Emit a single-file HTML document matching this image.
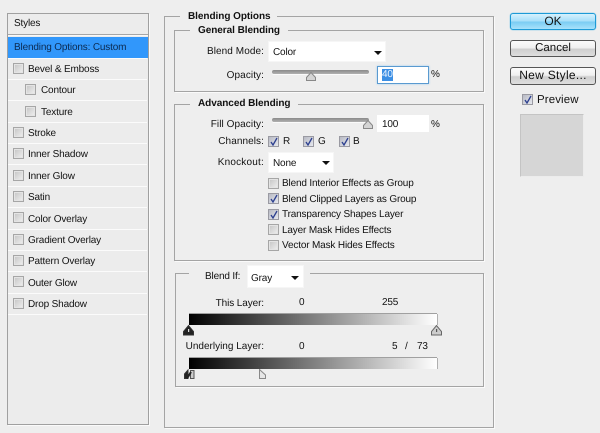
<!DOCTYPE html>
<html><head><meta charset="utf-8"><style>
html,body{margin:0;padding:0}
body{width:600px;height:433px;overflow:hidden;background:#eeeeee;position:relative;font-family:"Liberation Sans",sans-serif;font-size:10px;color:#111;text-rendering:geometricPrecision}
.a{position:absolute}
.t{position:absolute;white-space:nowrap;line-height:16px;letter-spacing:-.16px}
.t.r{text-align:right;letter-spacing:.08px}
.t.b{font-weight:bold;letter-spacing:-.05px;color:#111}
.g{position:absolute;border:1px solid #a4a4a4;box-shadow:1px 1px 0 #fafafa;box-sizing:border-box}
.lb{position:absolute;background:#eeeeee;height:12px}
.cb{position:absolute;width:11px;height:11px;box-sizing:border-box;border:1px solid #a6a6a6;background:linear-gradient(135deg,#c4c4c4,#f0f0f0);box-shadow:inset 0 0 0 1px #e4e4e4}
.cb.c{background:linear-gradient(135deg,#b8bac4,#e6e8ee);border-color:#9a9aa2;box-shadow:none}
.cb svg{position:absolute;left:0;top:0}
.sep{position:absolute;left:8px;width:139px;height:1px;background:#fbfbfb}
.dd{position:absolute;background:#fff;box-sizing:border-box;box-shadow:0 0 0 1px #f6f6f6}
.dd i{position:absolute;width:0;height:0;border-left:4px solid transparent;border-right:4px solid transparent;border-top:4px solid #111}
.tr{position:absolute;height:4px;background:linear-gradient(#8a8a8a,#b0b0b0);border-radius:2px;box-shadow:0 1px 0 #fafafa}
.btn{position:absolute;left:510px;width:86px;height:17px;box-sizing:border-box;border:1px solid #555;border-radius:3px;background:linear-gradient(#fbfbfb,#f0f0f0 45%,#cfcfcf 55%,#dedede);text-align:center;line-height:15px;font-size:12px;letter-spacing:.3px;color:#111}
.ip{position:absolute;background:#fff;box-sizing:border-box}
.grad{position:absolute;left:189px;width:248px;height:11px;background:linear-gradient(90deg,#000,#fff);box-shadow:0 -1px 0 #a0a0a0,1px 0 0 #b0b0b0}
svg{display:block}
</style></head><body>

<!-- left panel -->
<div class="g" style="left:7px;top:13px;width:142px;height:412px;background:#ececec;border-color:#a0a0a0"></div>
<div class="a" style="left:8px;top:34px;width:140px;height:1px;background:#a6a6a6"></div>
<div class="a" style="left:8px;top:35px;width:140px;height:1px;background:#f8f8f8"></div>
<div class="t" style="left:14px;top:16px">Styles</div>
<div class="a" style="left:8px;top:37px;width:140px;height:21px;background:#3197fb"></div>
<div class="t" style="left:14px;top:40px;color:#0c2a50">Blending Options: Custom</div>

<div class="sep" style="top:58px"></div><div class="sep" style="top:79px"></div><div class="sep" style="top:100px"></div><div class="sep" style="top:122px"></div><div class="sep" style="top:143px"></div><div class="sep" style="top:164px"></div><div class="sep" style="top:186px"></div><div class="sep" style="top:207px"></div><div class="sep" style="top:229px"></div><div class="sep" style="top:250px"></div><div class="sep" style="top:271px"></div><div class="sep" style="top:293px"></div><div class="sep" style="top:314px"></div>

<div class="cb" style="left:13px;top:63px"></div><div class="t" style="left:28px;top:62px">Bevel &amp; Emboss</div>
<div class="cb" style="left:25px;top:84px"></div><div class="t" style="left:41px;top:83px">Contour</div>
<div class="cb" style="left:25px;top:106px"></div><div class="t" style="left:41px;top:105px">Texture</div>
<div class="cb" style="left:13px;top:127px"></div><div class="t" style="left:28px;top:126px">Stroke</div>
<div class="cb" style="left:13px;top:148px"></div><div class="t" style="left:28px;top:147px">Inner Shadow</div>
<div class="cb" style="left:13px;top:170px"></div><div class="t" style="left:28px;top:169px">Inner Glow</div>
<div class="cb" style="left:13px;top:191px"></div><div class="t" style="left:28px;top:190px">Satin</div>
<div class="cb" style="left:13px;top:212px"></div><div class="t" style="left:28px;top:212px">Color Overlay</div>
<div class="cb" style="left:13px;top:234px"></div><div class="t" style="left:28px;top:233px">Gradient Overlay</div>
<div class="cb" style="left:13px;top:255px"></div><div class="t" style="left:28px;top:254px">Pattern Overlay</div>
<div class="cb" style="left:13px;top:276px"></div><div class="t" style="left:28px;top:276px">Outer Glow</div>
<div class="cb" style="left:13px;top:298px"></div><div class="t" style="left:28px;top:297px">Drop Shadow</div>

<!-- groups -->
<div class="g" style="left:164px;top:16px;width:330px;height:412px"></div>
<div class="lb" style="left:180px;top:10px;width:97px"></div>
<div class="t b" style="left:188px;top:9px">Blending Options</div>

<div class="g" style="left:174px;top:30px;width:310px;height:62px"></div>
<div class="lb" style="left:190px;top:24px;width:98px"></div>
<div class="t b" style="left:198px;top:23px">General Blending</div>

<div class="g" style="left:174px;top:104px;width:310px;height:157px"></div>
<div class="lb" style="left:190px;top:98px;width:108px"></div>
<div class="t b" style="left:198px;top:96px">Advanced Blending</div>

<div class="g" style="left:175px;top:273px;width:309px;height:114px"></div>
<div class="lb" style="left:189px;top:267px;width:121px;height:14px"></div>

<!-- general -->
<div class="t r" style="left:180px;width:84px;top:44px">Blend Mode:</div>
<div class="dd" style="left:269px;top:42px;width:116px;height:19px"><i style="left:105px;top:9px"></i></div>
<div class="t" style="left:273px;top:45px">Color</div>
<div class="t r" style="left:180px;width:84px;top:68px">Opacity:</div>
<div class="tr" style="left:272px;top:70px;width:97px"></div>
<svg class="a" style="left:305px;top:70px" width="12" height="12"><path d="M1.5 10.5V7.5L6 2.5l4.500 5v3z" fill="#d4d4d4" stroke="#888"/></svg>
<div class="ip" style="left:377px;top:66px;width:52px;height:18px;border:1px solid #5a9ad0;box-shadow:0 0 2px #9ccbf0"></div>
<div class="a" style="left:382px;top:69px;width:11px;height:12px;background:#3c8fe4"></div>
<div class="t" style="left:382px;top:67px;color:#eaf3ff">40</div>
<div class="t" style="left:431px;top:67px">%</div>

<!-- advanced -->
<div class="t r" style="left:180px;width:84px;top:117px">Fill Opacity:</div>
<div class="tr" style="left:272px;top:118px;width:97px"></div>
<svg class="a" style="left:362px;top:118px" width="12" height="12"><path d="M1.5 10.5V7.5L6 2.5l4.500 5v3z" fill="#d4d4d4" stroke="#888"/></svg>
<div class="ip" style="left:377px;top:115px;width:52px;height:17px"></div>
<div class="t" style="left:382px;top:117px">100</div>
<div class="t" style="left:431px;top:117px">%</div>

<div class="t r" style="left:180px;width:84px;top:134px">Channels:</div>
<div class="cb c" style="left:268px;top:136px"><svg width="10" height="10"><path d="M2 5l2 3 4-7" fill="none" stroke="#2c3f8f" stroke-width="1.3"/></svg></div>
<div class="t" style="left:283px;top:134px">R</div>
<div class="cb c" style="left:303px;top:136px"><svg width="10" height="10"><path d="M2 5l2 3 4-7" fill="none" stroke="#2c3f8f" stroke-width="1.3"/></svg></div>
<div class="t" style="left:318px;top:134px">G</div>
<div class="cb c" style="left:339px;top:136px"><svg width="10" height="10"><path d="M2 5l2 3 4-7" fill="none" stroke="#2c3f8f" stroke-width="1.3"/></svg></div>
<div class="t" style="left:353px;top:134px">B</div>

<div class="t r" style="left:180px;width:84px;top:155px;letter-spacing:.2px">Knockout:</div>
<div class="dd" style="left:269px;top:153px;width:64px;height:19px"><i style="left:53px;top:8px"></i></div>
<div class="t" style="left:273px;top:156px">None</div>

<div class="cb" style="left:268px;top:178px"></div><div class="t" style="left:282px;top:176px">Blend Interior Effects as Group</div>
<div class="cb c" style="left:268px;top:193px"><svg width="10" height="10"><path d="M2 5l2 3 4-7" fill="none" stroke="#2c3f8f" stroke-width="1.3"/></svg></div><div class="t" style="left:282px;top:192px">Blend Clipped Layers as Group</div>
<div class="cb c" style="left:268px;top:209px"><svg width="10" height="10"><path d="M2 5l2 3 4-7" fill="none" stroke="#2c3f8f" stroke-width="1.3"/></svg></div><div class="t" style="left:282px;top:207px">Transparency Shapes Layer</div>
<div class="cb" style="left:268px;top:224px"></div><div class="t" style="left:282px;top:223px">Layer Mask Hides Effects</div>
<div class="cb" style="left:268px;top:240px"></div><div class="t" style="left:282px;top:238px">Vector Mask Hides Effects</div>

<!-- blend if -->
<div class="t" style="left:205px;top:269px">Blend If:</div>
<div class="dd" style="left:248px;top:266px;width:55px;height:21px"><i style="left:43px;top:10px"></i></div>
<div class="t" style="left:251px;top:271px">Gray</div>

<div class="t r" style="left:170px;width:94px;top:296px;letter-spacing:-.1px">This Layer:</div>
<div class="t" style="left:299px;top:295px">0</div>
<div class="t" style="left:382px;top:295px">255</div>
<div class="grad" style="top:314px"></div>
<svg class="a" style="left:183px;top:324px" width="12" height="12"><path d="M.5 11V7.5L5.5 1.500l5 6V11z" fill="#222" stroke="#333"/><rect x="5" y="5" width="1.200" height="3" fill="#ddd"/></svg>
<svg class="a" style="left:431px;top:324px" width="12" height="12"><path d="M.5 11V7.500L5.500 1.500l5 6V11z" fill="#ccc" stroke="#666"/><rect x="5" y="5" width="1.200" height="3" fill="#555"/></svg>

<div class="t r" style="left:170px;width:94px;top:339px;letter-spacing:0">Underlying Layer:</div>
<div class="t" style="left:299px;top:339px">0</div>
<div class="t" style="left:392px;top:339px">5</div>
<div class="t" style="left:405px;top:339px">/</div>
<div class="t" style="left:417px;top:339px">73</div>
<div class="grad" style="top:358px"></div>
<svg class="a" style="left:184px;top:369px" width="12" height="10"><path d="M.5 9.500V5L4 1v8.500z" fill="#222" stroke="#333"/><path d="M6.500 9.500V1.500H10v8z" fill="#ccc" stroke="#555"/><path d="M3 9.500L7 3" stroke="#222" stroke-width="2"/></svg>
<svg class="a" style="left:259px;top:369px" width="8" height="10"><path d="M.5 9.500V.5L6.500 6v3.500z" fill="#e6e6e6" stroke="#888"/></svg>

<!-- right -->
<div class="btn" style="top:13px;height:17px;letter-spacing:0;border-color:#1d9ad6;background:linear-gradient(#d6f1fd,#a9e0fa 45%,#7ccdf3 55%,#a8e2fb);box-shadow:0 0 1px #19a6e0">OK</div>
<div class="btn" style="top:40px;font-size:11.5px;letter-spacing:0">Cancel</div>
<div class="btn" style="top:67px;height:18px">New Style...</div>
<div class="cb c" style="left:522px;top:94px"><svg width="10" height="10"><path d="M2 5l2 3 4-7" fill="none" stroke="#2c3f8f" stroke-width="1.3"/></svg></div>
<div class="t" style="left:537px;top:92px;font-size:11.5px;letter-spacing:.1px">Preview</div>
<div class="a" style="left:520px;top:114px;width:64px;height:63px;box-sizing:border-box;background:#d6d6d6;border:1px solid #c4c4c4;border-right-color:#ececec;border-bottom-color:#ececec"></div>

</body></html>
